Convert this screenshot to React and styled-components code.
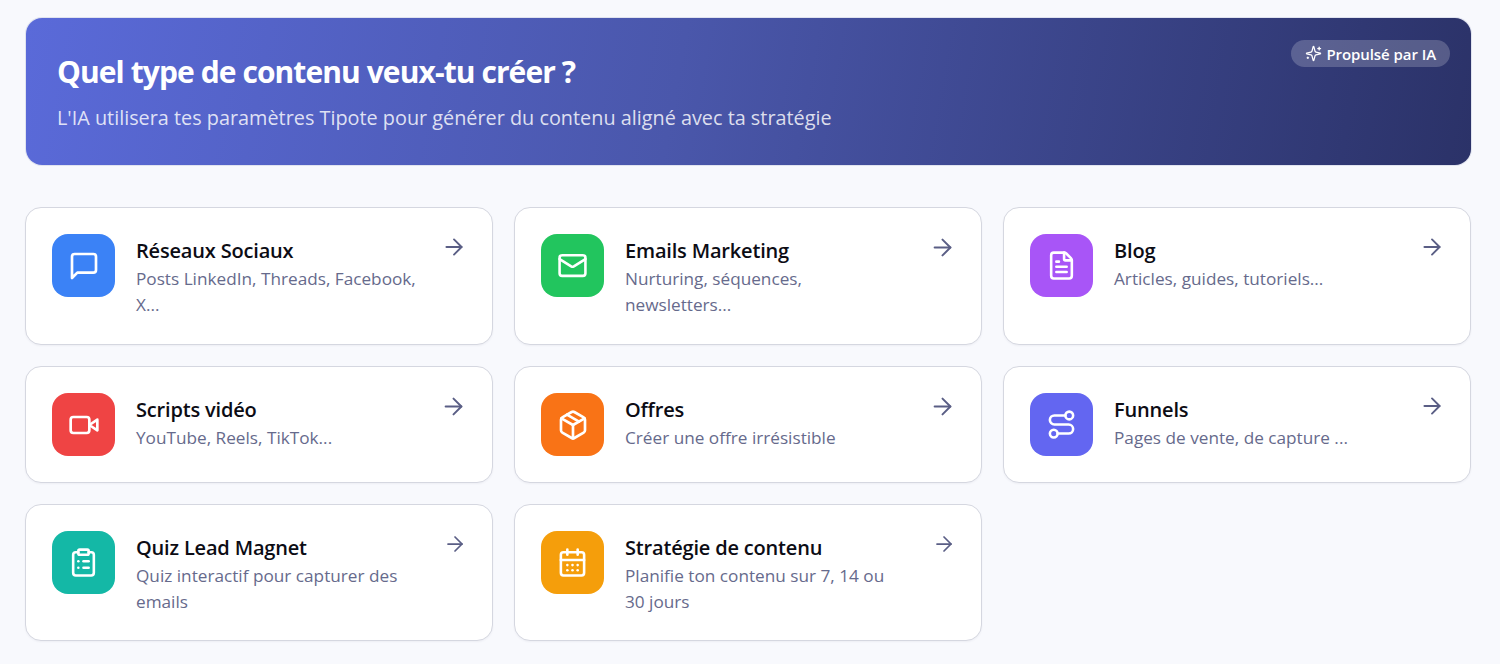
import React from "react";
import styled, { createGlobalStyle } from "styled-components";
import { ArrowRight, CalendarDays, ClipboardList, FileText, Mail, Package, Route } from "lucide-react";

const Global = createGlobalStyle`
  html, body { margin: 0; padding: 0; background: #f8f9fd; }
  body { font-family: "Open Sans", "Noto Sans", Arial, sans-serif; }
`;

const Page = styled.main`
  width: 1500px;
  height: 664px;
  box-sizing: border-box;
  padding: 18px 29px 0 25px;
  overflow: hidden;
  display: flex;
  flex-direction: column;
  gap: 42px;
`;

const Banner = styled.header`
  position: relative;
  height: 147px;
  margin-left: 1px;
  box-sizing: border-box;
  padding: 34px 31px 0;
  border-radius: 16px;
  background: linear-gradient(100deg, #5a6ad9 0%, #4a57ab 45%, #2b3268 100%);
  box-shadow: 0 0 0 1px rgba(60, 70, 140, 0.12);
`;

const Heading = styled.h1`
  margin: 0;
  color: #fff;
  font-size: 30px;
  line-height: 40px;
  font-weight: 700;
  letter-spacing: -0.92px;
`;

const Lead = styled.p`
  margin: 13px 0 0;
  color: rgba(255, 255, 255, 0.82);
  font-size: 19.83px;
  line-height: 26px;
`;

const Badge = styled.span`
  position: absolute;
  top: 22px;
  right: 21px;
  height: 27px;
  padding: 0 14px;
  display: flex;
  align-items: center;
  gap: 4px;
  border-radius: 14px;
  background: rgba(255, 255, 255, 0.2);
  color: #fff;
  font-size: 15px;
  font-weight: 600;
  letter-spacing: -0.07px;
`;

const Grid = styled.section`
  display: grid;
  grid-template-columns: repeat(3, 468px);
  grid-template-rows: 138px 117px 137px;
  column-gap: 21px;
  row-gap: 21px;
`;

const Card = styled.article`
  box-sizing: border-box;
  padding: 26px 25px 0 26px;
  display: flex;
  align-items: flex-start;
  gap: 21px;
  background: #fff;
  border: 1px solid #d5d7e0;
  border-radius: 16px;
  box-shadow: 0 1px 2px rgba(30, 35, 70, 0.05);
`;

const IconBox = styled.div`
  flex: 0 0 63px;
  height: 63px;
  border-radius: 16px;
  background: ${(p) => p.$color};
  color: #fff;
  display: flex;
  align-items: center;
  justify-content: center;
`;

const Body = styled.div`
  flex: 1;
  min-width: 0;
  padding-top: 2px;
`;

const Title = styled.h2`
  margin: 0;
  color: #0c0c14;
  font-size: 20px;
  line-height: 30px;
  font-weight: 600;
  letter-spacing: -0.18px;
`;

const Desc = styled.p`
  margin: 0;
  max-width: 280px;
  color: #666a8c;
  font-size: 17.2px;
  line-height: 26px;
`;

const ArrowSlot = styled.div`
  flex: none;
  height: ${(p) => Math.max(p.$size, 26)}px;
  display: flex;
  align-items: center;
  color: #5a5e85;
`;

const Glyph = ({ size = 32, strokeWidth = 2, children }) => (
  <svg width={size} height={size} viewBox="0 0 24 24" fill="none" stroke="currentColor" strokeWidth={strokeWidth} strokeLinecap="round" strokeLinejoin="round">
    {children}
  </svg>
);

const MessageIcon = () => (
  <Glyph><path d="M21 15a2 2 0 0 1-2 2H7l-4 4V5a2 2 0 0 1 2-2h14a2 2 0 0 1 2 2z" /></Glyph>
);

const VideoIcon = () => (
  <Glyph>
    <path d="m22 8-6 4 6 4V8Z" />
    <rect width="14" height="12" x="2" y="6" rx="2" ry="2" />
  </Glyph>
);

const SparkIcon = () => (
  <Glyph size={17} strokeWidth={1.75}>
    <path d="M9.937 15.5A2 2 0 0 0 8.5 14.063l-6.135-1.582a.5.5 0 0 1 0-.962L8.5 9.936A2 2 0 0 0 9.937 8.5l1.582-6.135a.5.5 0 0 1 .963 0L14.063 8.5A2 2 0 0 0 15.5 9.937l6.135 1.581a.5.5 0 0 1 0 .964L15.5 14.063a2 2 0 0 0-1.437 1.437l-1.582 6.135a.5.5 0 0 1-.963 0z" />
    <path d="M20 3v4" />
    <path d="M22 5h-4" />
    <path d="M4 17v2" />
    <path d="M5 18H3" />
  </Glyph>
);

const lucide = (Icon, size) => () => <Icon size={size} strokeWidth={2} />;

const items = [
  { t: "Réseaux Sociaux", d: "Posts LinkedIn, Threads, Facebook, X...", c: "#3b82f6", I: MessageIcon, s: 26 },
  { t: "Emails Marketing", d: "Nurturing, séquences, newsletters...", c: "#22c55e", I: lucide(Mail, 31), s: 27 },
  { t: "Blog", d: "Articles, guides, tutoriels...", c: "#a855f7", I: lucide(FileText, 31), s: 26 },
  { t: "Scripts vidéo", d: "YouTube, Reels, TikTok...", c: "#ef4444", I: VideoIcon, s: 27 },
  { t: "Offres", d: "Créer une offre irrésistible", c: "#f97316", I: lucide(Package, 32), s: 27 },
  { t: "Funnels", d: "Pages de vente, de capture ...", c: "#6366f1", I: lucide(Route, 31), s: 26 },
  { t: "Quiz Lead Magnet", d: "Quiz interactif pour capturer des emails", c: "#14b8a6", I: lucide(ClipboardList, 31), s: 24 },
  { t: "Stratégie de contenu", d: "Planifie ton contenu sur 7, 14 ou 30 jours", c: "#f59e0b", I: lucide(CalendarDays, 31), s: 24 },
];

export default function App() {
  return (
    <>
      <Global />
      <Page>
        <Banner>
          <Heading>Quel type de contenu veux-tu créer ?</Heading>
          <Lead>L'IA utilisera tes paramètres Tipote pour générer du contenu aligné avec ta stratégie</Lead>
          <Badge><SparkIcon />Propulsé par IA</Badge>
        </Banner>
        <Grid>
          {items.map(({ t, d, c, I, s }) => (
            <Card key={t}>
              <IconBox $color={c}><I /></IconBox>
              <Body>
                <Title>{t}</Title>
                <Desc>{d}</Desc>
              </Body>
              <ArrowSlot $size={s}><ArrowRight size={s} strokeWidth={1.75} /></ArrowSlot>
            </Card>
          ))}
        </Grid>
      </Page>
    </>
  );
}
